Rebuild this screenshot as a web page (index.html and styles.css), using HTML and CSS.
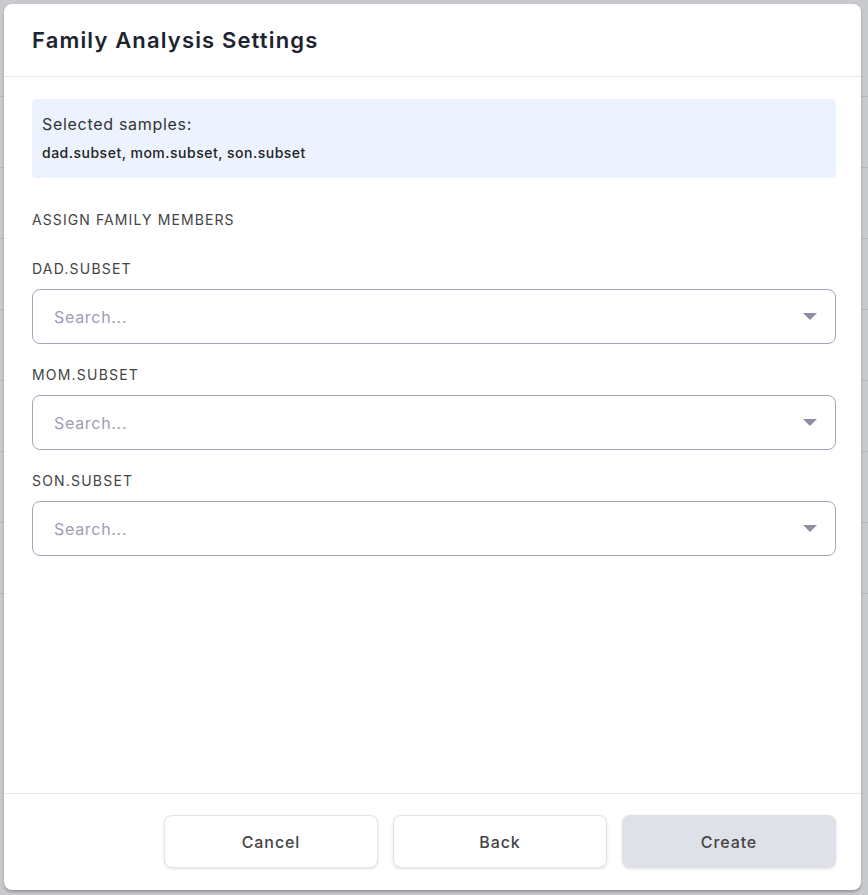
FILE: index.html
```html
<!DOCTYPE html>
<html lang="en">
<head>
<meta charset="utf-8">
<title>Family Analysis Settings</title>
<link rel="stylesheet" href="styles.css">
</head>
<body>
<div class="backdrop">
  <div class="modal">
    <div class="modal-header">
      <h2 class="modal-title">Family Analysis Settings</h2>
    </div>
    <div class="modal-body">
      <div class="info-box">
        <div class="info-title">Selected samples:</div>
        <div class="info-list">dad.subset, mom.subset, son.subset</div>
      </div>
      <div class="section-title">ASSIGN FAMILY MEMBERS</div>
      <div class="field">
        <div class="field-label">DAD.SUBSET</div>
        <div class="select">
          <span class="placeholder">Search...</span>
          <span class="caret"></span>
        </div>
      </div>
      <div class="field">
        <div class="field-label">MOM.SUBSET</div>
        <div class="select">
          <span class="placeholder">Search...</span>
          <span class="caret"></span>
        </div>
      </div>
      <div class="field">
        <div class="field-label">SON.SUBSET</div>
        <div class="select">
          <span class="placeholder">Search...</span>
          <span class="caret"></span>
        </div>
      </div>
    </div>
    <div class="modal-footer">
      <button class="btn">Cancel</button>
      <button class="btn">Back</button>
      <button class="btn btn-disabled">Create</button>
    </div>
  </div>
</div>
</body>
</html>
```

FILE: styles.css
```css
* { box-sizing: border-box; }
html, body { margin: 0; padding: 0; }
body {
  width: 868px;
  height: 895px;
  overflow: hidden;
  background-color: #c9cacd;
  background-image: repeating-linear-gradient(to bottom, transparent 0, transparent 70px, #b6b7bb 70px, #b6b7bb 71px);
  background-size: 100% 600px;
  background-position: 0 26px;
  background-repeat: no-repeat;
  font-family: Inter, "Liberation Sans", sans-serif;
}
.backdrop {
  padding: 4px 7px 5px 4px;
  height: 895px;
}
.modal {
  width: 857px;
  height: 886px;
  background: #fff;
  border-radius: 8px;
  box-shadow: 0 2px 3px rgba(0,0,0,0.25);
  display: flex;
  flex-direction: column;
}
.modal-header {
  height: 73px;
  border-bottom: 1px solid #e6e6ee;
  display: flex;
  align-items: center;
  padding: 0 28px;
}
.modal-title {
  margin: 0;
  font-size: 22px;
  font-weight: 600;
  color: #1d2430;
  letter-spacing: 1.15px;
}
.modal-body {
  flex: 1;
  padding: 22px 25px 0 28px;
}
.info-box {
  background: #ecf3fe;
  border-radius: 4px;
  height: 79px;
  padding: 15px 10px 0 10px;
}
.info-title {
  font-size: 16px;
  color: #333;
  line-height: 20px;
  letter-spacing: 0.7px;
}
.info-list {
  margin-top: 10px;
  font-size: 14px;
  font-weight: 500;
  color: #222;
  line-height: 18px;
  letter-spacing: 0.5px;
}
.section-title {
  margin-top: 33px;
  font-size: 14px;
  color: #444;
  letter-spacing: 1.1px;
  line-height: 18px;
}
.field { margin-top: 31px; }
.field + .field { margin-top: 22px; }
.field-label {
  font-size: 14px;
  color: #444;
  letter-spacing: 1.2px;
  line-height: 18px;
}
.select {
  margin-top: 11px;
  height: 55px;
  border: 1px solid #a5a5b8;
  border-radius: 8px;
  display: flex;
  align-items: center;
  justify-content: space-between;
  padding: 0 18px 0 21px;
}
.placeholder {
  font-size: 16px;
  color: #9d9db2;
  letter-spacing: 0.7px;
}
.caret {
  width: 0;
  height: 0;
  border-left: 7px solid transparent;
  border-right: 7px solid transparent;
  border-top: 7px solid #8e8ea2;
  margin-top: -1px;
}
.modal-footer {
  height: 97px;
  border-top: 1px solid #e6e6ee;
  display: flex;
  justify-content: flex-end;
  gap: 15px;
  padding: 21px 25px 0 0;
}
.btn {
  width: 214px;
  height: 53px;
  border: 1px solid #e3e4ea;
  border-radius: 8px;
  background: #fff;
  box-shadow: 0 1px 3px rgba(0,0,0,0.12);
  font-family: Inter, "Liberation Sans", sans-serif;
  font-size: 16px;
  font-weight: 500;
  color: #444;
  letter-spacing: 0.9px;
}
.btn-disabled {
  background: #dfe1e8;
  border-color: #dfe1e8;
}
```
